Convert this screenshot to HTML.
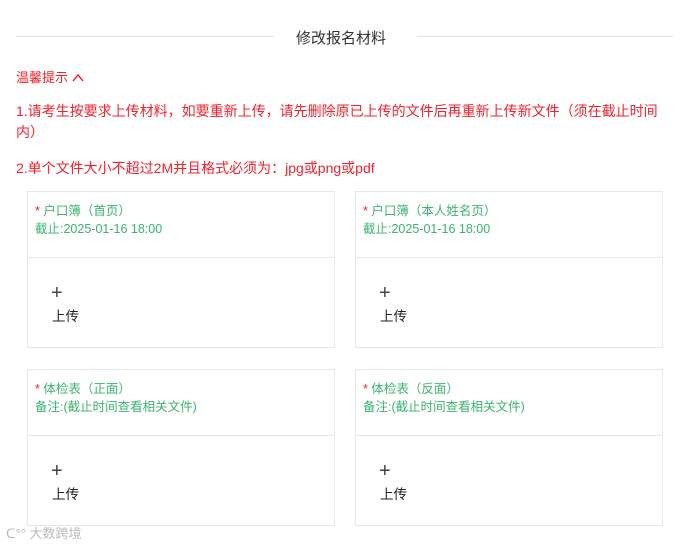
<!DOCTYPE html>
<html><head><meta charset="utf-8"><style>
*{margin:0;padding:0;box-sizing:border-box}
body{width:682px;height:546px;background:#fff;position:relative;overflow:hidden;font-family:"Liberation Sans","Noto Sans CJK SC",sans-serif}
.a{position:absolute;white-space:nowrap}
.line{position:absolute;height:1px;background:#e6e6e6;top:36px}
.red{color:#f5222d;font-size:14px}
.card{position:absolute;width:308px;height:157px;border:1px solid #e8e8e8}
.card .hd{height:66px;border-bottom:1px solid #e8e8e8;padding:10px 0 0 7px;font-size:12.5px;color:#3cb371;line-height:18px}
.card .hd b{color:#f5222d;font-weight:normal}
.plus{position:absolute;left:23px;top:25px;font-size:20px;color:#444;line-height:20px}
.up{position:absolute;left:24px;top:47px;font-size:13.5px;color:#222}
</style></head><body>
<div class="line" style="left:16px;width:258px"></div>
<div class="line" style="left:417px;width:256px"></div>
<div class="a" style="left:296px;top:27px;font-size:15px;color:#333">修改报名材料</div>
<div class="a red" style="left:16px;top:67px;font-size:13px">温馨提示 <svg width="12" height="9" viewBox="0 0 12 9" style="vertical-align:0"><path d="M1 8 L6 2 L11 8" fill="none" stroke="#f5222d" stroke-width="1.4"/></svg></div>
<div class="a red" style="left:16px;top:101px">1.请考生按要求上传材料，如要重新上传，请先删除原已上传的文件后再重新上传新文件（须在截止时间</div>
<div class="a red" style="left:16px;top:122px">内）</div>
<div class="a red" style="left:16px;top:158px">2.单个文件大小不超过2M并且格式必须为：jpg或png或pdf</div>

<div class="card" style="left:27px;top:191px"><div class="hd"><b>*</b> 户口簿（首页）<br>截止:2025-01-16 18:00</div><div style="position:relative"><div class="plus">+</div><div class="up">上传</div></div></div>
<div class="card" style="left:355px;top:191px"><div class="hd"><b>*</b> 户口簿（本人姓名页）<br>截止:2025-01-16 18:00</div><div style="position:relative"><div class="plus">+</div><div class="up">上传</div></div></div>
<div class="card" style="left:27px;top:369px"><div class="hd"><b>*</b> 体检表（正面）<br>备注:(截止时间查看相关文件)</div><div style="position:relative"><div class="plus">+</div><div class="up">上传</div></div></div>
<div class="card" style="left:355px;top:369px"><div class="hd"><b>*</b> 体检表（反面）<br>备注:(截止时间查看相关文件)</div><div style="position:relative"><div class="plus">+</div><div class="up">上传</div></div></div>
<div class="a" style="left:6px;top:523px;font-size:13px;color:#bbb">ᑕ°° 大数跨境</div>
</body></html>
